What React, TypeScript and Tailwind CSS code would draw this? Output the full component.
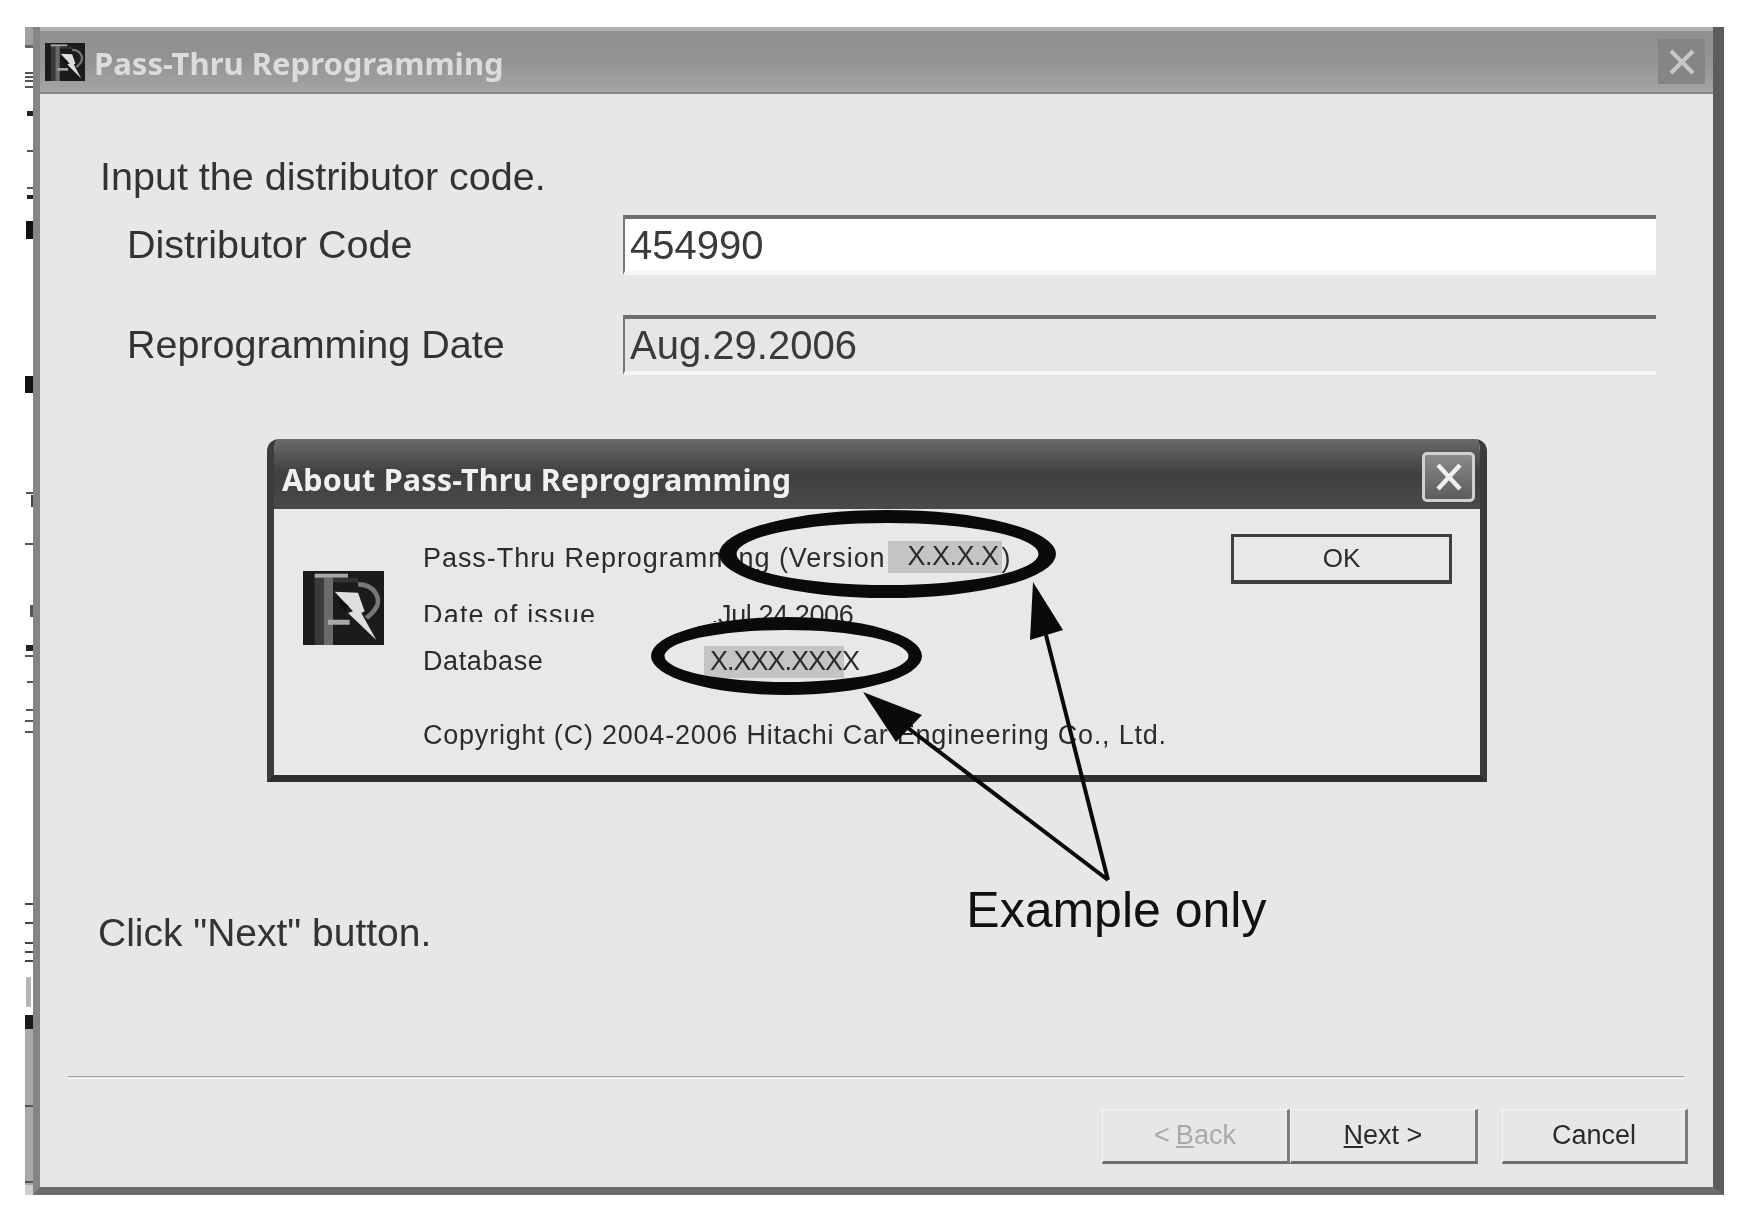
const sans = "font-['Liberation_Sans',sans-serif]";

function Logo({ w, h }: { w: number; h: number }) {
  return (
    <svg width={w} height={h} viewBox="0 0 243 220" preserveAspectRatio="none" className="shrink-0">
      <rect width="243" height="220" fill="#1b1b1b" />
      <rect x="35" y="20" width="28" height="200" fill="#3a3a3a" />
      <rect x="63" y="20" width="27" height="200" fill="#6a6a6a" />
      <rect x="35" y="8" width="100" height="12" fill="#a8a8a8" />
      <path d="M90 20H165V34H90Z" fill="#333" />
      <path d="M75 145H140V160H75Z" fill="#a8a8a8" />
      <path d="M165 40C215 40 240 85 215 115C205 130 195 135 190 140" stroke="#777" strokeWidth="14" fill="none" />
      <path d="M95 62L165 65L185 120L175 125L220 205L135 125L150 120Z" fill="#dedede" />
      <path d="M100 78L125 122L137 104Z" fill="#111" />
    </svg>
  );
}

function Field({ label, value, bg }: { label: string; value: string; bg: string }) {
  return (
    <div className="flex items-center">
      <div className="w-[583px] pl-[87px] text-[39.5px] leading-none text-[#333]">{label}</div>
      <div className={`flex h-[60px] flex-1 items-center border-t-[4px] border-l-[2px] border-b-[4px] border-t-[#6e6e6e] border-l-[#777] border-b-[#f6f6f6] pl-[5px] text-[40px] text-[#3a3a3a] ${bg}`}>
        {value}
      </div>
    </div>
  );
}

function WizardButton({ children, muted, narrow }: { children: React.ReactNode; muted?: boolean; narrow?: boolean }) {
  return (
    <div className={`flex h-[55px] items-center justify-center border-t border-l border-t-[#f5f5f5] border-l-[#f5f5f5] border-r-[3px] border-b-[3px] border-r-[#7c7c7c] border-b-[#6f6f6f] text-[27px] ${narrow ? "w-[186px]" : "w-[188px]"} ${muted ? "text-[#a9a9a9]" : "text-[#2a2a2a]"}`}>
      {children}
    </div>
  );
}

function About() {
  const ui = "text-[27px] leading-none text-[#2b2b2b]";
  return (
    <div className="ml-[227px] mt-[64px] flex h-[343px] w-[1220px] flex-col overflow-hidden rounded-t-[12px] border-x-[7px] border-b-[7px] border-x-[#3c3c3c] border-b-[#2e2e2e]">
      <div className="flex h-[70px] shrink-0 items-center justify-between bg-gradient-to-b from-[#6a6a6a] via-[#3f3f3f] to-[#4a4a4a] pl-[8px] pr-[5px] pt-[6px]">
        <span className="mt-[6px] font-['Noto_Sans',sans-serif] text-[30.5px] font-bold leading-none tracking-[0.2px] text-[#f0f0f0]">About Pass-Thru Reprogramming</span>
        <span className="flex h-[50px] w-[53px] items-center justify-center rounded-[5px] border-[3px] border-[#d0d0d0] bg-gradient-to-b from-[#8a8a8a] to-[#5c5c5c]">
          <svg width="34" height="34" viewBox="0 0 34 34"><path d="M6 5L28 29M28 5L6 29" stroke="#efefef" strokeWidth="4.5" /></svg>
        </span>
      </div>
      <div className="flex flex-1 bg-[#e8e8e8]">
        <div className="ml-[29px] mt-[62px]"><Logo w={81} h={74} /></div>
        <div className="ml-[39px] flex w-[740px] flex-col">
          <div className={`mt-[34px] flex h-[32px] items-center whitespace-nowrap tracking-[0.95px] ${ui}`}>
            <span>Pass-Thru Reprogramming (Version</span>
            <span className="ml-[2px] flex h-[32px] w-[114px] -translate-y-[2px] items-center bg-[#c4c4c4] pl-[20px] tracking-[-0.5px]">X.X.X.X</span>
            <span>)</span>
          </div>
          <div className={`mt-[27px] flex h-[20px] items-start overflow-hidden ${ui}`}>
            <span className="w-[288px] tracking-[1.2px]">Date of issue</span>
            <span className="tracking-[-0.4px]">.Jul.24.2006</span>
          </div>
          <div className={`mt-[24px] flex h-[32px] items-center tracking-[0.6px] ${ui}`}>
            <span className="w-[281px]">Database</span>
            <span className="flex h-[32px] w-[140px] items-center whitespace-nowrap bg-[#c4c4c4] pl-[6px] tracking-[-1px]">X.XXX.XXXX</span>
          </div>
          <div className={`mt-[44px] whitespace-nowrap tracking-[0.78px] ${ui}`}>Copyright (C) 2004-2006 Hitachi Car Engineering Co., Ltd.</div>
        </div>
        <div className="ml-[68px] mt-[25px] flex h-[50px] w-[221px] items-center justify-center border-[3px] border-b-[4px] border-[#3f3f3f] bg-[#e8e8e8] text-[26px] text-[#2b2b2b]">OK</div>
      </div>
    </div>
  );
}

function Strip() {
  const ticks: [number, number, number, string][] = [
    [45, 3, 8, "#666"], [72, 2, 8, "#555"], [76, 2, 8, "#555"], [80, 2, 8, "#555"], [86, 2, 8, "#555"],
    [111, 5, 6, "#222"], [150, 2, 6, "#555"], [187, 2, 6, "#555"], [195, 4, 6, "#222"],
    [221, 18, 7, "#111"], [376, 17, 8, "#111"], [492, 2, 7, "#555"], [495, 12, 2, "#444"], [543, 2, 8, "#555"],
    [605, 12, 3, "#555"], [645, 6, 7, "#222"], [655, 2, 8, "#555"], [681, 2, 6, "#555"], [709, 2, 7, "#555"],
    [720, 2, 8, "#555"], [731, 2, 8, "#555"], [903, 2, 8, "#444"], [922, 2, 8, "#444"], [942, 2, 8, "#444"],
    [951, 2, 8, "#444"], [960, 2, 8, "#444"], [1015, 14, 8, "#1a1a1a"], [1105, 2, 8, "#555"], [1181, 2, 8, "#555"],
  ];
  return (
    <svg width="8" height="1168" viewBox="0 27 8 1168" className="absolute left-[25px] top-[27px]">
      <rect x="0" y="27" width="8" height="18" fill="#a0a0a0" />
      <rect x="1" y="977" width="5" height="30" fill="#b5b5b5" />
      <rect x="0" y="1029" width="8" height="156" fill="#aaaaaa" />
      <rect x="0" y="1185" width="8" height="10" fill="#cfcfcf" />
      {ticks.map(([y, h, w, c]) => <rect key={y} x={8 - w} y={y} width={w} height={h} fill={c} />)}
    </svg>
  );
}

function Marks() {
  return (
    <svg width="1758" height="1212" viewBox="0 0 1758 1212" className="pointer-events-none absolute left-0 top-0">
      <path
        fill="#0a0a0a"
        fillRule="evenodd"
        d="M719 554A168.5 44 0 1 0 1056 554A168.5 44 0 1 0 719 554ZM736.5 554A151 31 0 1 1 1038.5 554A151 31 0 1 1 736.5 554Z"
      />
      <path
        fill="#0a0a0a"
        fillRule="evenodd"
        d="M651 656A135.5 39 0 1 0 922 656A135.5 39 0 1 0 651 656ZM664.5 656A122 26 0 1 1 908.5 656A122 26 0 1 1 664.5 656Z"
      />
      <path d="M1108 880L1046 635M1108 880L908 728" stroke="#0a0a0a" strokeWidth="4" fill="none" />
      <path d="M1033 582L1030 640L1063 630Z" fill="#0a0a0a" />
      <path d="M863 692L922 715L896 742Z" fill="#0a0a0a" />
    </svg>
  );
}

export default function App() {
  return (
    <div className={`relative h-[1212px] w-[1758px] overflow-hidden bg-white blur-[0.6px] ${sans}`}>
      <div className="pl-[33px] pt-[27px]">
        <div className="flex h-[1168px] w-[1691px] flex-col border-l-[7px] border-r-[11px] border-b-[8px] border-l-[#858585] border-r-[#5c5c5c] border-b-[#6c6c6c] bg-[#e7e7e7]">
          <div className="flex h-[67px] shrink-0 items-center justify-between border-t-[4px] border-b-[2px] border-t-[#b0b0b0] border-b-[#858585] bg-gradient-to-b from-[#8f8f8f] via-[#949494] to-[#a4a4a4] pl-[5px] pr-[8px]">
            <div className="flex items-center">
              <Logo w={40} h={38} />
              <span className="ml-[9px] mt-[3px] font-['Noto_Sans',sans-serif] text-[31px] font-bold leading-none text-[#dcdcdc]">Pass-Thru Reprogramming</span>
            </div>
            <span className="flex h-[45px] w-[47px] items-center justify-center bg-[#858585]">
              <svg width="30" height="30" viewBox="0 0 30 30"><path d="M4 4L26 26M26 4L4 26" stroke="#c8c8c8" strokeWidth="4" /></svg>
            </span>
          </div>
          <div className="flex flex-1 flex-col">
            <div className="ml-[60px] mt-[63px] text-[39.5px] leading-none text-[#333]">Input the distributor code.</div>
            <div className="mr-[57px] mt-[18px] flex flex-col gap-[40px]">
              <Field label="Distributor Code" value="454990" bg="bg-white" />
              <Field label="Reprogramming Date" value="Aug.29.2006" bg="bg-[#e6e6e6]" />
            </div>
            <About />
            <div className="mt-[103px] flex items-start pl-[58px]">
              <span className="mt-[28px] text-[39px] leading-none text-[#333]">Click "Next" button.</span>
              <span className="ml-[535px] text-[50px] leading-none text-[#111]">Example only</span>
            </div>
            <div className="ml-[28px] mr-[29px] mt-[124px] h-[3px] border-t border-b border-t-[#a0a0a0] border-b-[#f5f5f5]" />
            <div className="mr-[25px] mt-[30px] flex justify-end">
              <WizardButton muted>&lt; <span className="ml-[6px] underline">B</span>ack</WizardButton>
              <WizardButton><span className="underline">N</span>ext &gt;</WizardButton>
              <div className="ml-[24px]"><WizardButton narrow>Cancel</WizardButton></div>
            </div>
          </div>
        </div>
      </div>
      <Strip />
      <Marks />
    </div>
  );
}
